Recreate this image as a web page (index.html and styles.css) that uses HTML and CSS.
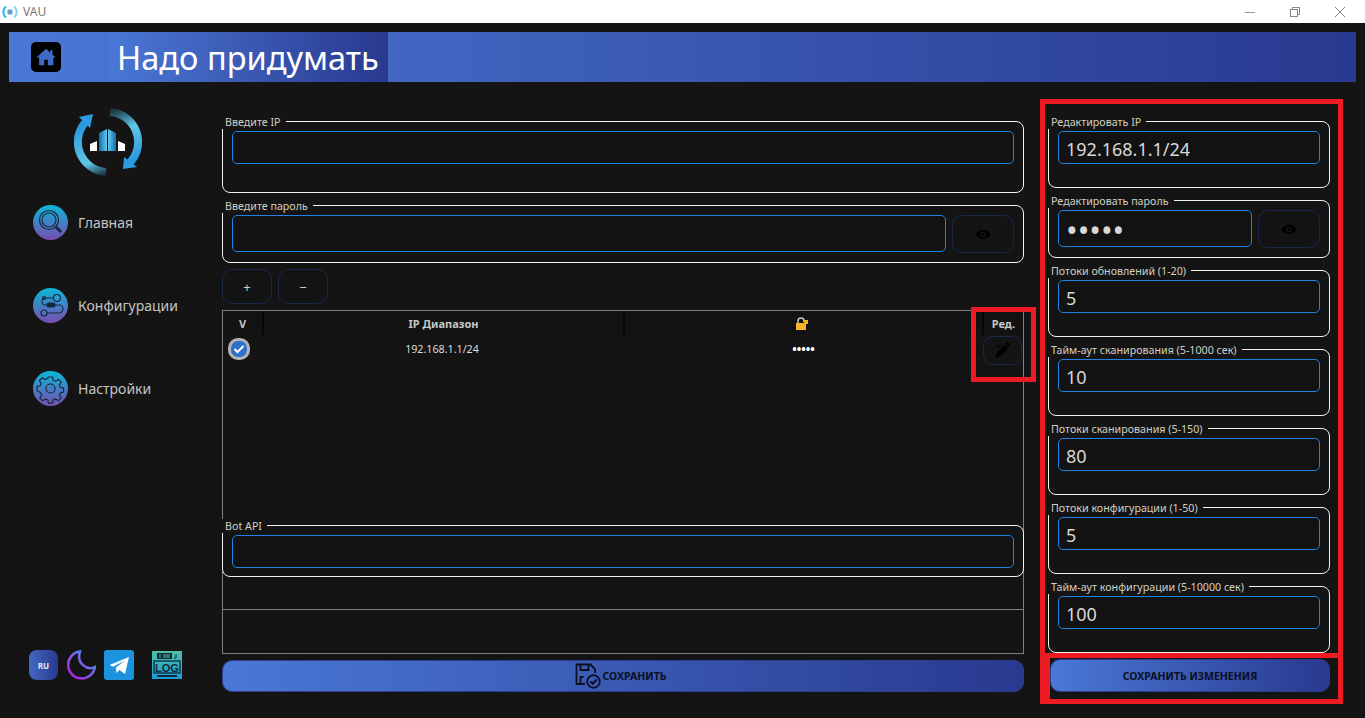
FILE: index.html
```html
<!DOCTYPE html>
<html lang="ru">
<head>
    <meta charset="UTF-8">
    <title>VAU</title>
    <link rel="stylesheet" href="styles.css">
</head>
<body>
<div class="titlebar">
    <div class="app-name">
        <svg class="app-icon" viewBox="0 0 16 16" fill="none">
            <path d="M4 2.500a7 7 0 0 0 0 11" stroke="#35b5ea" stroke-width="2"/>
            <path d="M12 2.500a7 7 0 0 1 0 11" stroke="#8ad3f2" stroke-width="2"/>
            <rect x="5.500" y="5.500" width="5" height="5" rx="1" fill="#5f9fd0"/>
        </svg>
        <span>VAU</span>
    </div>
    <div class="win-controls">
        <svg class="win-btn" viewBox="0 0 12 12" fill="none"><path d="M1 6.500h10" stroke="#999"/></svg>
        <svg class="win-btn" viewBox="0 0 12 12" fill="none"><rect x="1.500" y="3.500" width="7" height="7" stroke="#888"/><path d="M3.500 3.500v-2h7v7h-2" stroke="#888"/></svg>
        <svg class="win-btn" viewBox="0 0 12 12" fill="none"><path d="M1 1l10 10M11 1L1 11" stroke="#888"/></svg>
    </div>
</div>

<header class="top-banner">
    <div class="home-slot">
        <div class="home-btn">
            <svg viewBox="0 0 24 24" width="22" height="22"><path d="M12 3L1.500 12.500h3V21h5.500v-6h4v6H20v-8.500h2.500L19 9.300V4.500h-2.500v2.500z" fill="#3f6ac5"/></svg>
        </div>
    </div>
    <h1 class="banner-title">Надо придумать</h1>
</header>

<main class="layout">
    <aside class="sidebar">
        <svg class="logo" viewBox="0 0 68 68" fill="none">
            <defs>
                <linearGradient id="arcL" gradientUnits="userSpaceOnUse" x1="38" y1="68" x2="14" y2="6">
                    <stop offset="0" stop-color="#3ab4e6" stop-opacity="0"/>
                    <stop offset=".3" stop-color="#62c6e6"/>
                    <stop offset="1" stop-color="#1f8fdc"/>
                </linearGradient>
                <linearGradient id="arcR" gradientUnits="userSpaceOnUse" x1="30" y1="0" x2="54" y2="62">
                    <stop offset="0" stop-color="#3ab4e6" stop-opacity="0"/>
                    <stop offset=".4" stop-color="#62c6e6"/>
                    <stop offset="1" stop-color="#1f8fdc"/>
                </linearGradient>
                <linearGradient id="tower" x1="0" y1="0" x2="1" y2="0">
                    <stop offset="0" stop-color="#0f6fb0"/>
                    <stop offset=".5" stop-color="#6ccdf0"/>
                    <stop offset="1" stop-color="#0f6fb0"/>
                </linearGradient>
            </defs>
            <path d="M32 64A30 30 0 0 1 13 12.500" stroke="url(#arcL)" stroke-width="8"/>
            <path d="M36 4A30 30 0 0 1 55 55.500" stroke="url(#arcR)" stroke-width="8"/>
            <path d="M5 9l14-3-3 14z" fill="#2d9be2"/>
            <path d="M63 59l-14 2 1-12z" fill="#2d9be2"/>
            <path d="M16 36l7-3v10h-7zM51 36l-7-3v10h7z" fill="#fff"/>
            <path d="M25 25l8-4v22h-8zM42 25l-8-4v22h8z" fill="url(#tower)"/>
        </svg>

        <nav class="side-nav">
            <a class="nav-item">
                <span class="nav-icon">
                    <svg viewBox="0 0 35 35" fill="none" stroke="#16283f" stroke-width="1.200"><circle cx="16" cy="15" r="9.500"/><circle cx="16" cy="15" r="7"/><path d="M23 22l5 5" stroke-width="3"/></svg>
                </span>
                Главная
            </a>
            <a class="nav-item">
                <span class="nav-icon">
                    <svg viewBox="0 0 35 35" fill="none" stroke="#16283f" stroke-width="1.100"><circle cx="24" cy="10" r="3.500"/><circle cx="11" cy="25" r="3"/><rect x="14" y="15" width="8" height="4" rx="2" fill="#16283f"/><path d="M20 10H11a4 4 0 0 0 0 7h3M22 17h4a4 4 0 0 1 0 8H14"/><circle cx="11" cy="10" r="1.500"/></svg>
                </span>
                Конфигурации
            </a>
            <a class="nav-item">
                <span class="nav-icon">
                    <svg viewBox="0 0 35 35" fill="none" stroke="#16283f" stroke-width="1.200"><circle cx="17.500" cy="17.500" r="4.500"/><path d="M15.500 6h4l.7 3.200 2.400 1 2.800-1.800 2.800 2.800-1.800 2.800 1 2.400 3.200.7v4l-3.200.7-1 2.400 1.800 2.800-2.800 2.800-2.800-1.800-2.400 1-.7 3.200h-4l-.7-3.200-2.400-1-2.800 1.800-2.800-2.800 1.800-2.800-1-2.400L4 19.500v-4l3.200-.7 1-2.400-1.800-2.800 2.800-2.800 2.800 1.800 2.400-1z"/></svg>
                </span>
                Настройки
            </a>
        </nav>

        <div class="side-tools">
            <span class="lang-btn">RU</span>
            <svg class="tool-icon" viewBox="0 0 30 30" fill="none">
                <defs>
                    <linearGradient id="moon" x1="1" y1="0" x2="0" y2="1">
                        <stop offset="0" stop-color="#38a8e8"/>
                        <stop offset="1" stop-color="#c012e8"/>
                    </linearGradient>
                </defs>
                <path d="M14 1.500A13.500 13.500 0 1 0 29 17c-8 4-19-4-15-15.500z" stroke="url(#moon)" stroke-width="2.500"/>
            </svg>
            <svg class="tool-icon" viewBox="0 0 30 30">
                <rect width="30" height="30" rx="3" fill="#1c93de"/>
                <path d="M5.500 15L25 7l-4 17-5.500-4-3 3-.6-5.500L21 10.500 9 16.800z" fill="#fff"/>
            </svg>
            <svg class="tool-icon log-icon" viewBox="0 0 30 28">
                <defs>
                    <linearGradient id="logbg" x1="0" y1="0" x2="0" y2="1">
                        <stop offset="0" stop-color="#4fc0a0"/>
                        <stop offset="1" stop-color="#1a9ce0"/>
                    </linearGradient>
                </defs>
                <rect width="30" height="28" fill="url(#logbg)"/>
                <rect x="5" y="2" width="15" height="6" fill="#0f2a3a"/>
                <path d="M7 4h2M7 6h2M11 4h7M11 6h7" stroke="#4fc0a0"/>
                <path d="M24 3v4h-2" stroke="#0f2a3a" fill="none"/>
                <rect x="2" y="10" width="26" height="12" fill="none" stroke="#0f2a3a" stroke-width="1.300"/>
                <text class="log-text" x="15" y="20.500" text-anchor="middle">LOG</text>
                <rect x="5" y="24" width="20" height="2" fill="#0f2a3a"/>
            </svg>
        </div>
    </aside>

    <section class="center-col">
        <div class="group group-tall">
            <span class="group-label">Введите IP</span>
            <input class="field" type="text">
        </div>
        <div class="group group-pass">
            <span class="group-label">Введите пароль</span>
            <div class="field-row">
                <input class="field field-pass" type="text">
                <button class="eye-btn">
                    <svg viewBox="0 0 24 16" width="16" height="11"><path d="M12 1C7 1 3 4 0.500 8 3 12 7 15 12 15s9-3 11.500-7C21 4 17 1 12 1z" fill="#000"/><circle cx="12" cy="8" r="4" fill="#1a1a1a"/><circle cx="12" cy="8" r="2.500" fill="#000"/></svg>
                </button>
            </div>
        </div>
        <div class="add-row">
            <button class="small-btn">+</button>
            <button class="small-btn">−</button>
        </div>

        <div class="table-wrap">
            <div class="table-box">
                <table class="ip-table">
                    <thead>
                        <tr>
                            <th class="col-check">V</th>
                            <th class="col-ip">IP Диапазон</th>
                            <th class="col-pass">
                                <svg viewBox="0 0 14 13" width="14" height="13"><path d="M3 6V4a3 3 0 0 1 6 0v1" fill="none" stroke="#c8c8c8" stroke-width="1.500"/><rect x="1" y="6" width="10" height="7" fill="#f4b428"/><rect x="9" y="3" width="4" height="4" fill="#f4b428"/></svg>
                            </th>
                            <th class="col-edit">Ред.</th>
                        </tr>
                    </thead>
                    <tbody>
                        <tr>
                            <td>
                                <svg class="check-mark" viewBox="0 0 22 22"><rect x="1.500" y="1.500" width="19" height="19" rx="8.500" fill="#2f70cc" stroke="#b4b4b4" stroke-width="3"/><path d="M6.500 11l3 3L15.500 8" fill="none" stroke="#fff" stroke-width="2"/></svg>
                            </td>
                            <td class="cell-ip">192.168.1.1/24</td>
                            <td class="cell-dots">•••••</td>
                            <td class="cell-edit">
                                <button class="edit-btn">
                                    <svg viewBox="0 0 18 18" width="18" height="18"><path d="M1 17l1.500-5L11 3.500l3.500 3.500L6 15.500z M12 2.500l1.500-1.500 3.500 3.500-1.500 1.500z" fill="#000"/><path d="M2 5h5" stroke="#000"/></svg>
                                </button>
                            </td>
                        </tr>
                    </tbody>
                </table>
            </div>
            <div class="table-foot"></div>
            <div class="group group-bot">
                <span class="group-label">Bot API</span>
                <input class="field" type="text">
            </div>
        </div>

        <button class="save-btn">
            <svg viewBox="0 0 26 26" width="26" height="26" fill="none" stroke="#0b0f24" stroke-width="1.800"><path d="M10 21H1.500V1.500h14l4.500 4.500v4"/><path d="M5.500 2v5h8V2"/><path d="M5.500 20v-6h3"/><circle cx="18.500" cy="18.500" r="6.300"/><path d="M15.500 18.500l2.300 2.300 4-4.300" stroke-width="2"/></svg>
            <span>СОХРАНИТЬ</span>
        </button>
    </section>

    <section class="right-col">
        <div class="group group-edit">
            <span class="group-label">Редактировать IP</span>
            <input class="field field-value" type="text" value="192.168.1.1/24">
        </div>
        <div class="group group-pass group-pass-edit">
            <span class="group-label">Редактировать пароль</span>
            <div class="field-row">
                <input class="field field-value field-pass field-secret" type="password" value="12345">
                <button class="eye-btn">
                    <svg viewBox="0 0 24 16" width="16" height="11"><path d="M12 1C7 1 3 4 0.500 8 3 12 7 15 12 15s9-3 11.500-7C21 4 17 1 12 1z" fill="#000"/><circle cx="12" cy="8" r="4" fill="#1a1a1a"/><circle cx="12" cy="8" r="2.500" fill="#000"/></svg>
                </button>
            </div>
        </div>
        <div class="group group-edit">
            <span class="group-label">Потоки обновлений (1-20)</span>
            <input class="field field-value" type="text" value="5">
        </div>
        <div class="group group-edit">
            <span class="group-label">Тайм-аут сканирования (5-1000 сек)</span>
            <input class="field field-value" type="text" value="10">
        </div>
        <div class="group group-edit">
            <span class="group-label">Потоки сканирования (5-150)</span>
            <input class="field field-value" type="text" value="80">
        </div>
        <div class="group group-edit">
            <span class="group-label">Потоки конфигурации (1-50)</span>
            <input class="field field-value" type="text" value="5">
        </div>
        <div class="group group-edit">
            <span class="group-label">Тайм-аут конфигурации (5-10000 сек)</span>
            <input class="field field-value" type="text" value="100">
        </div>
        <button class="save-btn save-changes">СОХРАНИТЬ ИЗМЕНЕНИЯ</button>
    </section>
</main>

<!-- red annotation frames -->
<div class="mark mark-edit"></div>
<div class="mark mark-fields"></div>
<div class="mark mark-save"></div>
</body>
</html>
```

FILE: styles.css
```css
*{margin:0;padding:0;box-sizing:border-box;}
html,body{height:718px;overflow:hidden;}
body{background:#141414;font-family:"Noto Sans","Open Sans",sans-serif;color:#c9c9c9;position:relative;}

.titlebar{height:23px;background:#fff;display:flex;justify-content:space-between;align-items:center;}
.app-name{display:flex;align-items:center;gap:5px;padding-left:2px;font-size:12px;color:#777;}
.app-icon{width:16px;height:16px;}
.win-controls{display:flex;gap:33px;padding-right:19px;}
.win-btn{width:12px;height:12px;}

.top-banner{height:50px;margin:9px 9px 0;display:flex;background:linear-gradient(90deg,#4a78d6,#29398f);}
.home-slot{width:100px;padding:10px 0 0 22px;}
.home-btn{width:30px;height:30px;background:#000;border-radius:5px;display:flex;align-items:center;justify-content:center;}
.banner-title{width:279px;padding-left:8px;font-size:32.6px;font-weight:400;line-height:52px;color:#fff;background:linear-gradient(90deg,#4a78d6,#29398f);white-space:nowrap;}

.layout{display:grid;grid-template-columns:213px 802px 306px;padding:39px 0 0 9px;}
.right-col{margin-left:24px;display:flex;flex-direction:column;gap:12px;}
.center-col{display:flex;flex-direction:column;}

.sidebar{display:flex;flex-direction:column;height:597px;position:relative;}
.logo{width:68px;height:68px;margin:-13px 0 0 65px;}
.side-nav{display:flex;flex-direction:column;gap:48px;margin:29px 0 0 24px;}
.nav-item{display:flex;align-items:center;gap:10px;font-size:14px;color:#c4c4c4;height:35px;}
.nav-icon{width:35px;height:35px;border-radius:50%;background:linear-gradient(180deg,#0ab6d8,#7a4db0);display:block;}
.nav-icon svg{width:35px;height:35px;display:block;}
.side-tools{display:flex;align-items:center;gap:8px;margin:auto 0 0 20px;padding-bottom:38px;}
.lang-btn{width:29px;height:30px;border-radius:8px;background:linear-gradient(90deg,#4368c4,#29398f);font-size:8px;font-weight:700;color:#e8e8f8;display:flex;align-items:center;justify-content:center;}
.tool-icon{width:30px;height:30px;display:block;}
.log-icon{height:28px;margin-left:10px;}
.log-text{font-family:"Liberation Sans",sans-serif;font-size:11px;font-weight:700;fill:#0f2a3a;}

.group{position:relative;border:1px solid #f2f2f2;border-radius:8px;padding:9px;}
.group-label{position:absolute;left:-1px;top:-7px;height:14px;padding:0 5px 0 3px;background:#141414;font-size:10.7px;line-height:15px;color:#d0d0c4;white-space:nowrap;}
.group-tall{height:72px;}
.group-pass{height:58px;margin-top:12px;}
.group-edit{height:67px;}
.group-pass-edit{margin-top:0;}
.group-bot{position:absolute;left:0;right:0;top:215px;height:52px;background:#141414;}

.field{display:block;width:100%;height:33px;background:#121212;border:1px solid #1e82e6;border-radius:5px;outline:none;color:#d8d8d8;font-family:inherit;}
.field-value{font-size:18px;padding:2px 0 0 7px;}
.field-row{display:flex;gap:6px;}
.field-pass{height:37px;flex:1;min-width:0;}
.field-secret{font-size:31px;}
.eye-btn{width:62px;height:38px;flex:none;background:transparent;border:1px solid #1a2850;border-radius:10px;display:flex;align-items:center;justify-content:center;}

.add-row{display:flex;gap:6px;margin:6px 0;}
.small-btn{width:50px;height:35px;background:transparent;border:1px solid #1a2850;border-radius:10px;color:#d0d0d0;font-size:13px;font-family:inherit;}

.table-wrap{position:relative;}
.table-box{height:300px;border:1px solid #808080;}
.table-foot{height:44px;border:1px solid #808080;border-top:none;}
.ip-table{width:100%;table-layout:fixed;border-collapse:collapse;font-size:10.7px;color:#dcdcdc;}
.ip-table th{height:24px;font-size:11px;font-weight:700;color:#c8c8c8;background:#121212;border-right:2px solid #060606;}
.ip-table th:last-child{border-right:none;}
.ip-table td{height:30px;padding-bottom:2px;text-align:center;}
.ip-table .cell-ip{padding-right:3px;}
.col-check{width:40px;}
.col-ip{width:361px;}
.col-edit{width:40px;}
.col-pass svg{display:block;margin:0 auto;position:relative;left:-2px;}
.check-mark{width:22px;height:22px;display:block;margin-left:5px;}
.cell-dots{font-size:12px;color:#fff;font-weight:700;}
.ip-table .cell-edit{padding:0;}
.edit-btn{width:39px;height:29px;background:transparent;border:1px solid #1a2850;border-radius:10px;display:flex;align-items:center;justify-content:center;}

.save-btn{height:32px;margin-top:6px;padding-right:4px;border:1px solid #2b3f8e;border-radius:10px;background:linear-gradient(90deg,#4a78d6,#29398f);color:#0b0f24;font-family:inherit;font-size:10.5px;font-weight:700;display:flex;align-items:center;justify-content:center;gap:1px;}
.save-changes{margin:-6px 0 0 2px;height:33px;padding-right:0;}

.mark{position:absolute;border:5px solid #ed1c24;}
.mark-edit{left:971px;top:307px;width:65px;height:75px;}
.mark-fields{left:1040px;top:99px;width:303px;height:559px;}
.mark-save{left:1040px;top:653px;width:303px;height:51px;border-left-width:10px;}
```
